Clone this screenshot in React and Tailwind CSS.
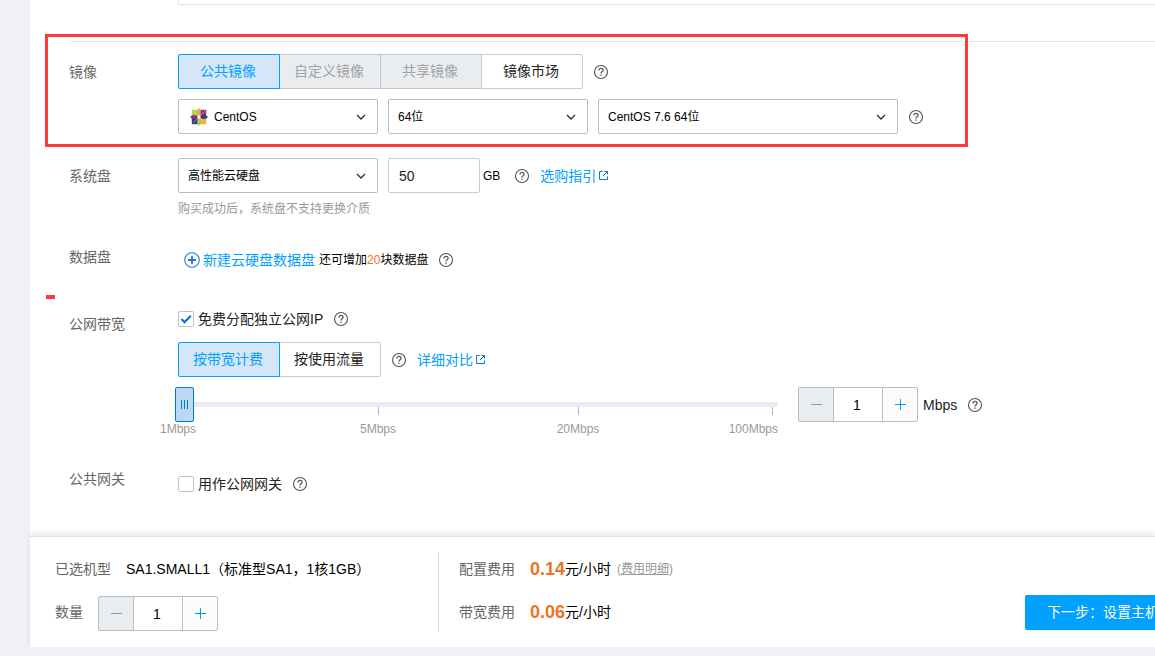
import { useState } from "react";

const HelpIcon = () => (
  <button type="button" aria-label="帮助" className="block shrink-0 text-[#555]">
    <svg width="16" height="16" viewBox="0 0 16 16" fill="none" stroke="currentColor">
      <circle cx="8" cy="8" r="6.5" strokeWidth="1.1" />
      <path d="M5.9 6.5c0-1.3.9-2.1 2.1-2.1s2.1.8 2.1 1.9c0 1.5-2.1 1.6-2.1 3.2" strokeWidth="1.3" />
      <path d="M8 10.4v1.4" strokeWidth="1.4" />
    </svg>
  </button>
);

const ExternalIcon = () => (
  <svg width="9" height="9" viewBox="0 0 9 9" fill="none" stroke="#0b74cc" strokeWidth="1">
    <path d="M3.5.5h-3v8h8v-3" />
    <path d="M5.5.5h3v3M8.5.5l-4.5 4.5" />
  </svg>
);

const CentosIcon = () => (
  <svg width="18" height="18" viewBox="0 0 18 18">
    <rect x="1.8" y="1.8" width="6.4" height="6.4" fill="#a8d04a" />
    <rect x="9.8" y="1.8" width="6.4" height="6.4" fill="#96307f" />
    <rect x="1.8" y="9.8" width="6.4" height="6.4" fill="#373a80" />
    <rect x="9.8" y="9.8" width="6.4" height="6.4" fill="#f0ac38" />
    <path d="M9 0l1.7 2v4.6L9 8.2 7.3 6.6V2z" fill="#f0ac38" />
    <path d="M18 9l-2 1.7h-4.6L9.8 9l1.6-1.7H16z" fill="#373a80" />
    <path d="M9 18l-1.7-2v-4.6L9 9.8l1.7 1.6V16z" fill="#a8d04a" />
    <path d="M0 9l2-1.7h4.6L8.2 9l-1.6 1.7H2z" fill="#96307f" />
    <path d="M3.2 3.2l11.6 11.6M14.8 3.2L3.2 14.8" stroke="#fff" strokeWidth=".7" opacity=".6" />
    <circle cx="9" cy="9" r="1.6" fill="#fff" />
  </svg>
);

const Row = ({ label, className = "", labelClass = "", children }) => (
  <div className={`flex items-start ${className}`}>
    <div className={`w-[109px] shrink-0 text-[#666] ${labelClass}`}>{label}</div>
    <div className="min-w-0 flex-1">{children}</div>
  </div>
);

const Select = ({ label, options, icon, className }) => (
  <div className={`relative shrink-0 ${className}`}>
    <select
      aria-label={label}
      className={`h-[35px] w-full appearance-none rounded-xs border border-[#b9bdc8] bg-white pr-8 text-xs text-black ${
        icon ? "pl-[35px]" : "pl-[9px]"
      }`}
    >
      {options.map((o) => (
        <option key={o}>{o}</option>
      ))}
    </select>
    {icon && <span className="pointer-events-none absolute top-[9px] left-3">{icon}</span>}
    <svg
      className="pointer-events-none absolute top-[13px] right-3"
      width="10"
      height="10"
      viewBox="0 0 10 10"
      fill="none"
      stroke="#333"
      strokeWidth="1.4"
    >
      <path d="M1 3l4 4 4-4" />
    </svg>
  </div>
);

const Segments = ({ items, value, onChange }) => (
  <div className="flex shrink-0">
    {items.map((item, i) => {
      let style = "border-[#c8ccd6] bg-white text-[#222]";
      if (item.disabled) style = "border-[#c0c6cc] bg-[#e9edf0] text-[#a2a2a2]";
      if (item.name === value) style = "relative border-[#00a1ff] bg-[#d6e6f9] text-[#00a1ff]";
      return (
        <button
          key={item.name}
          type="button"
          disabled={item.disabled}
          aria-pressed={item.name === value}
          onClick={() => onChange(item.name)}
          className={`h-[35px] w-[102px] border pr-0.5 pb-0.5 first:rounded-l-xs last:rounded-r-xs ${
            i > 0 ? "-ml-px" : ""
          } ${style}`}
        >
          {item.name}
        </button>
      );
    })}
  </div>
);

const Stepper = ({ label, value, onChange }) => (
  <div className="flex h-[35px] shrink-0">
    <button
      type="button"
      aria-label="减少"
      disabled={value <= 1}
      onClick={() => onChange(value - 1)}
      className="flex w-9 items-center justify-center rounded-l-xs border border-[#b9bdc8] bg-[#e9edf0]"
    >
      <span className="h-px w-[11px] bg-[#999]" />
    </button>
    <input
      aria-label={label}
      value={value}
      onChange={(e) => onChange(Math.max(1, Number(e.target.value) || 1))}
      className="-ml-px w-[50px] border border-[#b9bdc8] bg-white pr-0.5 text-center text-black"
    />
    <button
      type="button"
      aria-label="增加"
      onClick={() => onChange(value + 1)}
      className="-ml-px flex w-9 items-center justify-center rounded-r-xs border border-[#b9bdc8] bg-[#fcfcfd]"
    >
      <svg width="11" height="11" viewBox="0 0 11 11" stroke="#00a1ff">
        <path d="M0 5.5h11M5.5 0v11" />
      </svg>
    </button>
  </div>
);

const Checkbox = ({ label, defaultChecked }) => (
  <label className="flex items-center gap-1 text-[#222]">
    <span className="relative size-4">
      <input
        type="checkbox"
        defaultChecked={defaultChecked}
        className="peer block size-4 appearance-none rounded-xs border border-[#c0c3cc] bg-white"
      />
      <svg
        className="pointer-events-none absolute top-0 left-0 hidden peer-checked:block"
        width="16"
        height="16"
        viewBox="0 0 16 16"
        fill="none"
        stroke="#006fd6"
        strokeWidth="2"
      >
        <path d="M3.5 8l3 3.2L12.8 4.8" />
      </svg>
    </span>
    {label}
  </label>
);

const imageTabs = [
  { name: "公共镜像" },
  { name: "自定义镜像", disabled: true },
  { name: "共享镜像", disabled: true },
  { name: "镜像市场" },
];

const billingTabs = [{ name: "按带宽计费" }, { name: "按使用流量" }];

const marks = ["1Mbps", "5Mbps", "20Mbps"];

const App = () => {
  const [image, setImage] = useState("公共镜像");
  const [billing, setBilling] = useState("按带宽计费");
  const [disk, setDisk] = useState("50");
  const [bandwidth, setBandwidth] = useState(1);
  const [count, setCount] = useState(1);

  return (
    <div className="min-h-screen overflow-x-hidden bg-[#eff1f6] pl-[30px] font-['Liberation_Sans','Noto_Sans_CJK_SC',sans-serif] text-sm leading-5">
      <main className="relative bg-white pb-[42px] pl-[39px]">
        <div className="ml-[109px] h-[5px] border-b border-l border-[#dde3e6]" />
        <hr className="mt-9 ml-px border-[#e5e8ed]" />

        <Row label="镜像" className="mt-3" labelClass="pt-2">
          <div className="flex items-center gap-2.5">
            <Segments items={imageTabs} value={image} onChange={setImage} />
            <HelpIcon />
          </div>
          <div className="mt-2.5 flex items-center gap-2.5">
            <Select label="操作系统" options={["CentOS"]} icon={<CentosIcon />} className="w-[200px]" />
            <Select label="位数" options={["64位"]} className="w-[200px]" />
            <Select label="版本" options={["CentOS 7.6 64位"]} className="w-[300px]" />
            <HelpIcon />
          </div>
        </Row>

        <Row label="系统盘" className="mt-6" labelClass="pt-2">
          <div className="flex items-center">
            <Select label="系统盘类型" options={["高性能云硬盘"]} className="w-[200px]" />
            <input
              aria-label="系统盘大小"
              value={disk}
              onChange={(e) => setDisk(e.target.value)}
              className="ml-2.5 h-[35px] w-[92px] rounded-xs border border-[#c8ccd6] px-2.5 text-[#222]"
            />
            <span className="mr-3.5 ml-[3px] text-xs text-black">GB</span>
            <HelpIcon />
            <a href="#guide" className="ml-2.5 flex items-center gap-[3px] text-[#00a1ff]">
              选购指引
              <ExternalIcon />
            </a>
          </div>
          <p className="mt-1.5 text-xs leading-5 text-[#999]">购买成功后，系统盘不支持更换介质</p>
        </Row>

        <Row label="数据盘" className="mt-7">
          <div className="flex items-center pt-[3px] pl-1.5">
            <button type="button" className="flex items-center gap-[3px] text-[#00a1ff]">
              <svg width="16" height="16" viewBox="0 0 16 16" fill="none" stroke="#2378dc">
                <circle cx="8" cy="8" r="7.3" strokeWidth="1.1" />
                <path d="M4 8h8M8 4v8" strokeWidth="1.8" />
              </svg>
              新建云硬盘数据盘
            </button>
            <span className="mr-2.5 ml-1 text-xs text-black">
              还可增加<span className="text-[#ed7322]">20</span>块数据盘
            </span>
            <HelpIcon />
          </div>
        </Row>

        <Row label="公网带宽" className="mt-[39px]" labelClass="pt-[5px]">
          <div className="flex items-center gap-2.5">
            <Checkbox label="免费分配独立公网IP" defaultChecked />
            <HelpIcon />
          </div>
          <div className="mt-[13px] flex items-center gap-2.5">
            <Segments items={billingTabs} value={billing} onChange={setBilling} />
            <HelpIcon />
            <a href="#compare" className="flex items-center gap-[3px] text-[#00a1ff]">
              详细对比
              <ExternalIcon />
            </a>
          </div>
          <div className="mt-2.5 flex items-start gap-5">
            <div className="w-[600px] shrink-0">
              <input
                type="range"
                aria-label="带宽"
                min="1"
                max="100"
                value={bandwidth}
                onChange={(e) => setBandwidth(Number(e.target.value))}
                className="relative z-10 -ml-[3px] block h-[35px] w-[603px] appearance-none bg-transparent [&::-webkit-slider-runnable-track]:h-[5px] [&::-webkit-slider-runnable-track]:rounded-full [&::-webkit-slider-runnable-track]:bg-[#e9ecf5] [&::-webkit-slider-thumb]:-mt-[15px] [&::-webkit-slider-thumb]:h-[35px] [&::-webkit-slider-thumb]:w-[19px] [&::-webkit-slider-thumb]:appearance-none [&::-webkit-slider-thumb]:rounded-xs [&::-webkit-slider-thumb]:border [&::-webkit-slider-thumb]:border-[#0078d7] [&::-webkit-slider-thumb]:bg-[#bbd9f4] [&::-webkit-slider-thumb]:bg-[linear-gradient(90deg,#0078d7_1px,transparent_1px,transparent_3px,#0078d7_3px,#0078d7_4px,transparent_4px,transparent_6px,#0078d7_6px)] [&::-webkit-slider-thumb]:bg-[length:7px_9px] [&::-webkit-slider-thumb]:bg-center [&::-webkit-slider-thumb]:bg-no-repeat"
              />
              <div className="-mt-[15px] -ml-[100px] flex text-xs leading-4 text-[#999]">
                {marks.map((mark) => (
                  <div key={mark} className="w-[200px] text-center">
                    <div className="mx-auto mb-1.5 h-2 w-px bg-[#b3b8c2]" />
                    {mark}
                  </div>
                ))}
                <div className="w-[100px] text-right">
                  <div className="mr-[5px] mb-1.5 ml-auto h-2 w-px bg-[#b3b8c2]" />
                  100Mbps
                </div>
              </div>
            </div>
            <div className="flex items-center">
              <Stepper label="带宽值" value={bandwidth} onChange={setBandwidth} />
              <span className="mr-2.5 ml-[5px] text-[#222]">Mbps</span>
              <HelpIcon />
            </div>
          </div>
        </Row>

        <Row label="公共网关" className="mt-8">
          <div className="flex items-center gap-2.5 pt-[5px]">
            <Checkbox label="用作公网网关" />
            <HelpIcon />
          </div>
        </Row>

        {/* highlight marks */}
        <div className="pointer-events-none absolute top-[34px] left-[15px] h-[113px] w-[923px] border-3 border-[#fd3a39]" />
        <div className="pointer-events-none absolute top-[295px] left-4 h-1 w-[9px] bg-[#fd3a39]" />
      </main>

      <footer className="relative flex items-start border-t border-[#d9e1e5] bg-white py-[15px] shadow-[0_-3px_5px_rgba(60,90,130,0.12)]">
        <div className="h-20 w-[409px] shrink-0 border-r border-[#d8d8d8] pt-[7px] pl-[25px]">
          <div className="flex gap-[15px]">
            <span className="text-[#666]">已选机型</span>
            <span className="text-black">SA1.SMALL1（标准型SA1，1核1GB）</span>
          </div>
          <div className="mt-[17px] flex items-start gap-[15px]">
            <span className="pt-1.5 text-[#666]">数量</span>
            <Stepper label="数量" value={count} onChange={setCount} />
          </div>
        </div>
        <div className="shrink-0 pt-[7px] pl-5">
          <div className="flex items-center gap-[15px]">
            <span className="text-[#666]">配置费用</span>
            <span className="flex items-center text-black">
              <b className="text-lg leading-5 text-[#ed7322]">0.14</b>元/小时
              <span className="ml-1.5 text-xs leading-5 text-[#999]">
                (
                <a href="#detail" className="underline">
                  费用明细
                </a>
                )
              </span>
            </span>
          </div>
          <div className="mt-[23px] flex items-center gap-[15px]">
            <span className="text-[#666]">带宽费用</span>
            <span className="flex items-center text-black">
              <b className="text-lg leading-5 text-[#ed7322]">0.06</b>元/小时
            </span>
          </div>
        </div>
        <button
          type="button"
          className="mt-[43px] -mr-[26px] ml-auto h-[35px] shrink-0 rounded-xs bg-[#00a1ff] px-[22px] pb-0.5 text-white"
        >
          下一步：设置主机
        </button>
      </footer>
    </div>
  );
};

export default App;
